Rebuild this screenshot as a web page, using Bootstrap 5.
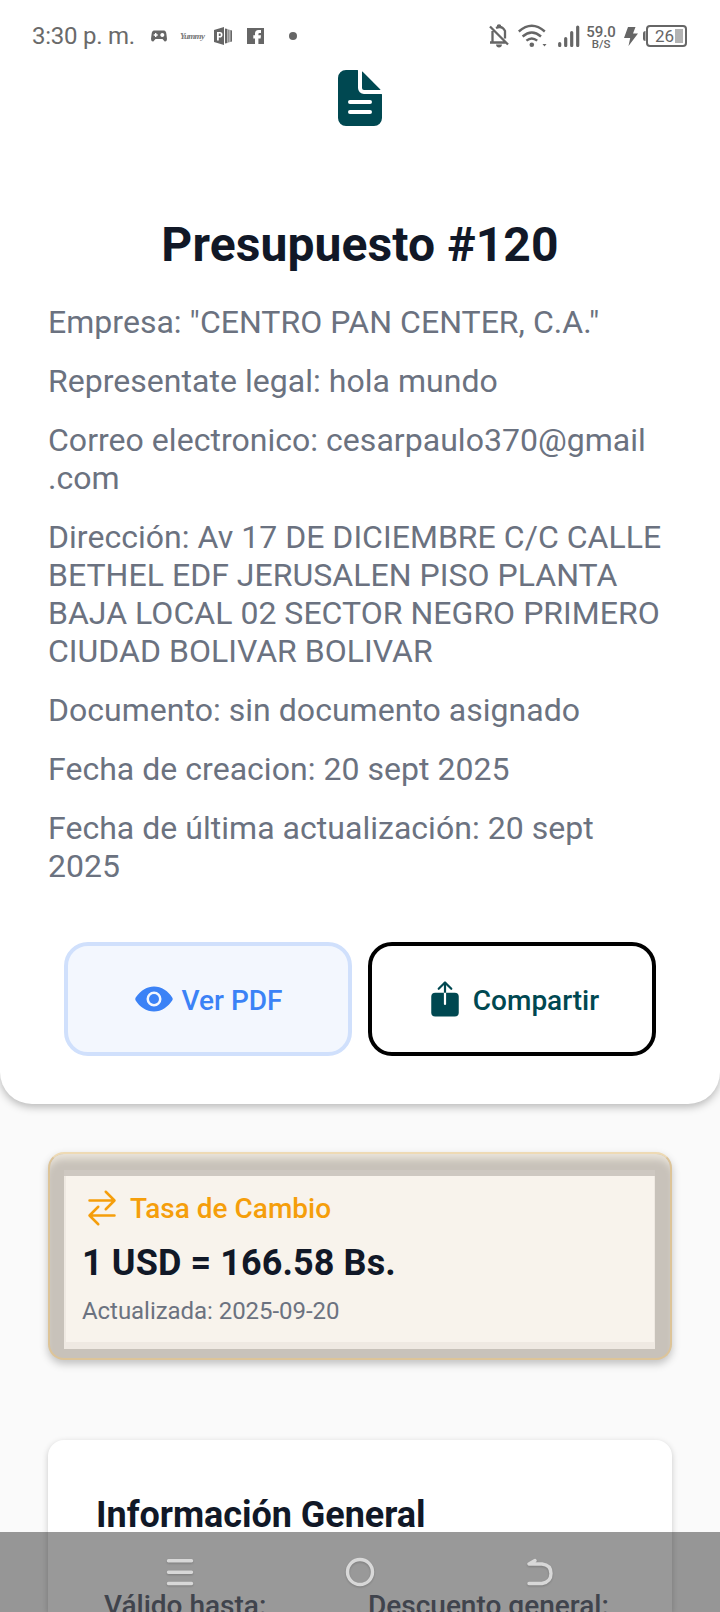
<!DOCTYPE html>
<html lang="es">
<head>
<meta charset="utf-8">
<meta name="viewport" content="width=device-width, initial-scale=1">
<title>Presupuesto #120</title>
<link href="https://cdn.jsdelivr.net/npm/bootstrap@5.3.0/dist/css/bootstrap.min.css" rel="stylesheet">
<style>
body{font-family:Roboto,sans-serif;background:#fafafa;height:1612px;overflow:hidden;color:#111827}
svg{display:block;flex:none}
.status-bar{height:70px;padding:2px 33px 0 32px;color:#666}
.clock{font-size:24px;line-height:28px;letter-spacing:-.25px;color:#6a6a6a;width:119px;white-space:nowrap}
.yummy{font:italic 700 9px/10px "Liberation Serif",serif;width:22px;margin:0 12px 0 13px;white-space:nowrap;letter-spacing:-.7px;color:#777}
.net-speed{width:30px;margin:2px 8px 0 6px;white-space:nowrap;font-size:15px;line-height:14px;font-weight:500}
.net-speed small{display:block;font-size:11.5px;line-height:10px}
.level{width:44px;height:22px;font-size:17px;line-height:22px}
.hero{height:1104px;border-radius:0 0 32px 32px;box-shadow:0 3px 8px rgba(0,0,0,.27)}
.hero h1{font-size:48px;line-height:56px;font-weight:700;letter-spacing:.1px;margin:91px 0 0}
.details{padding:0 48px;margin-top:30px;font-size:32px;line-height:38px;color:#6b7280;gap:21px}
.details p{margin:0;white-space:nowrap;letter-spacing:.03px}
.actions{padding:0 64px;margin-top:57px;gap:16px}
.action-btn{height:114px;width:288px;border-width:4px;border-radius:24px;font-size:28px;line-height:34px;font-weight:500}
.action-btn span{padding-top:3px}
.view-btn,.view-btn:hover{background:#f3f7fe;border-color:#d0e0fc;color:#3b82f6}
.share-btn,.share-btn:hover{background:#fff;border-color:#000;color:#004851}
.rate-card{margin:48px 48px 0;height:208px;border:2px solid #ddc498;border-top-color:#eedab4;border-radius:16px;padding:22px 15px 9px 14px;background:#c8c2ba;box-shadow:0 4px 9px rgba(0,0,0,.23),inset 0 9px 7px -4px #e9e4da}
.rate-body{height:173px;background:#f8f3ec;border:solid #efe9e2;border-width:0 1px 7px 2px;padding:12px 16px 0;box-shadow:0 -6px 0 #cec8c1}
.rate-title{font-size:28px;line-height:38px;font-weight:500;color:#f59e0b}
.rate-title span{padding-top:2px;line-height:36px}
.rate-value{font-size:36px;line-height:44px;font-weight:700;margin-top:13px;letter-spacing:.1px}
.rate-date{font-size:24px;line-height:28px;color:#6b7280;margin-top:12px;letter-spacing:-.05px}
.info-card{margin:80px 48px 0;height:172px;overflow:hidden;border-radius:16px 16px 0 0;box-shadow:0 2px 6px rgba(0,0,0,.2);padding:53px 48px 0}
.info-card h2{font-size:36px;line-height:44px;font-weight:700;margin:0;letter-spacing:-.04px}
.info-labels{font-size:28px;line-height:34px;font-weight:500;color:#6b7280;margin-top:52px}
.nav-keys{height:80px;padding:0 90px;background:rgba(0,0,0,.4)}
.nav-keys svg{filter:drop-shadow(0 1px 1px rgba(0,0,0,.2));stroke:#d8d8d8;fill:none;stroke-width:3.4;stroke-linecap:round;stroke-linejoin:round}
</style>
</head>
<body>
<header class="hero bg-white">
  <div class="status-bar d-flex align-items-center">
    <div class="clock">3:30 p. m.</div>
    <svg width="16" height="12" viewBox="0 0 16 12"><path fill="#666" fill-rule="evenodd" d="M3 .5h10Q15 .5 15.400 4L16 9q-.2 2.800-2.300 2.500L11.500 9h-7L2.300 11.500Q.2 11.800 0 9L.6 4Q1 .5 3 .5zM4 3v1.300H2.700v1.400H4V7h1.400V5.700h1.300V4.300H5.400V3zM11.300 3a2 2 0 1 0 .01 0z"/></svg>
    <span class="yummy">Yummy</span>
    <svg width="18" height="18" viewBox="0 0 18 18"><path fill="#666" fill-rule="evenodd" d="M0 3 10 0v18L0 15zM3 5v8.500h1.800V10.500h1Q8.500 10.500 8.500 7.700 8.500 5 6 5zm1.800 1.500H6q.8 0 .8 1.200T6 9H4.800zM11 1.500l2.500.6v13.800l-2.500.6zM14.300 2.500l1.200.3v12.400l-1.200.3zM16.300 3.100l1.700.5v10.800l-1.700.5z"/></svg>
    <svg style="margin-left:15px" width="17" height="16" viewBox="0 0 17 16"><path fill="#666" d="M0 0h17v16H0z"/><path fill="#fff" d="M8 16v-5.600H6.300V7.300H8V5.500Q8 2 11.500 2H14v3h-1.600q-1 0-1 1v1.300H14l-.4 3.100h-2.200V16z"/></svg>
    <svg width="8" height="8" style="margin-left:25px"><circle cx="4" cy="4" r="4" fill="#666"/></svg>
    <div class="ms-auto d-flex align-items-center">
      <svg width="20" height="24" viewBox="0 0 20 24" fill="none" stroke="#666" stroke-width="2.300"><path d="M3.500 7v10.500M1 18.500h16M7 4q6-3 9 3v7.500M1 2.500l18 18"/><path fill="#666" stroke="none" d="M8 3V1q2-1.500 4 0v2zM7 20.500h6q-.3 3-3 3t-3-3z"/></svg>
      <svg style="margin-left:9px" width="29" height="24" viewBox="0 0 29 24" fill="none" stroke="#666" stroke-width="2.400"><path d="M.8 7.500q13-11.500 26 0M4.600 12.500q9.200-8 18.400 0M8.400 16.600q5.400-4.400 10.800 0"/><circle cx="13.800" cy="20.700" r="2.300" fill="#666" stroke="none"/><path fill="#666" stroke="none" d="M24.500 20h4l-2 2.500z"/></svg>
      <svg style="margin-left:11px" width="22" height="22" viewBox="0 0 22 22" stroke="#666" stroke-width="3.200" stroke-linecap="round"><path d="M1.700 18.500v2M7.700 13.500v7M13.700 7.500v13M19.700 2v18.500"/></svg>
      <div class="net-speed text-center">59.0<small>B/S</small></div>
      <svg width="14" height="19" viewBox="0 0 14 19"><path fill="#666" d="M4 0h7.500L9 6.500h5L4.500 19l1.700-8H0z"/></svg>
      <div class="level position-relative" style="margin-left:5px">
        <svg width="44" height="22" viewBox="0 0 44 22"><rect x="4" y="1" width="39" height="20" rx="3" fill="#fff" stroke="#666" stroke-width="2"/><path fill="#666" d="M2.500 6v10Q0 16 0 13.500v-5Q0 6 2.500 6z"/><path fill="#b3b3b3" d="M32 4h8v14h-8z"/></svg>
        <span class="position-absolute top-0" style="left:12px">26</span>
      </div>
    </div>
  </div>
  <svg class="mx-auto" width="44" height="56" viewBox="80 32 352 448" fill="#004851"><path d="M428 224H288a48 48 0 0 1-48-48V36a4 4 0 0 0-4-4h-92a64 64 0 0 0-64 64v320a64 64 0 0 0 64 64h224a64 64 0 0 0 64-64V228a4 4 0 0 0-4-4zm-92 160H176a16 16 0 0 1 0-32h160a16 16 0 0 1 0 32zm0-80H176a16 16 0 0 1 0-32h160a16 16 0 0 1 0 32z"/><path d="M419.220 188.590 275.410 44.780a2 2 0 0 0-3.410 1.410V176a16 16 0 0 0 16 16h129.810a2 2 0 0 0 1.410-3.410z"/></svg>
  <h1 class="text-center">Presupuesto #120</h1>
  <div class="details d-flex flex-column">
    <p>Empresa: "CENTRO PAN CENTER, C.A."</p>
    <p>Representate legal: hola mundo</p>
    <p>Correo electronico: cesarpaulo370@gmail<br>.com</p>
    <p>Dirección: Av 17 DE DICIEMBRE C/C CALLE<br>BETHEL EDF JERUSALEN PISO PLANTA<br>BAJA LOCAL 02 SECTOR NEGRO PRIMERO<br>CIUDAD BOLIVAR BOLIVAR</p>
    <p>Documento: sin documento asignado</p>
    <p>Fecha de creacion: 20 sept 2025</p>
    <p>Fecha de última actualización: 20 sept<br>2025</p>
  </div>
  <div class="actions d-flex">
    <button class="btn action-btn view-btn d-flex align-items-center justify-content-center gap-2 p-0">
      <svg width="40" height="40" viewBox="0 0 512 512" fill="currentColor"><circle cx="256" cy="256" r="64"/><path d="M490.840 238.600c-26.460-40.920-60.790-75.680-99.270-100.530C349 110.550 302 96 255.660 96c-42.520 0-84.330 12.150-124.270 36.110-40.730 24.430-77.630 60.120-109.680 106.070a31.920 31.920 0 0 0-.64 35.540c26.410 41.330 60.400 76.140 98.280 100.650C162 402 207.900 416 255.660 416c46.710 0 93.810-14.430 136.200-41.720 38.460-24.770 72.720-59.660 99.080-100.920a32.200 32.200 0 0 0-.1-34.760zM256 352a96 96 0 1 1 96-96 96.110 96.110 0 0 1-96 96z"/></svg>
      <span>Ver PDF</span>
    </button>
    <button class="btn action-btn share-btn d-flex align-items-center justify-content-center gap-2 p-0">
      <svg width="40" height="40" viewBox="0 0 40 40" fill="none" stroke="currentColor" stroke-width="2.200" stroke-linecap="round" stroke-linejoin="round"><rect x="6.250" y="13.700" width="27.500" height="23.800" rx="4" fill="currentColor" stroke="none"/><path stroke="#fff" d="M20 14.500V25"/><path stroke-linecap="butt" d="M20 3v10.700"/><path d="m13.700 9.800 6.300-6.300 6.300 6.300"/></svg>
      <span>Compartir</span>
    </button>
  </div>
</header>
<main>
  <section class="rate-card">
    <div class="rate-body">
      <div class="rate-title d-flex align-items-center gap-2">
        <svg width="40" height="40" viewBox="0 0 512 512" fill="none" stroke="currentColor" stroke-width="32" stroke-linecap="round" stroke-linejoin="round"><path d="m304 48 112 112-112 112M398.870 160H96M208 464 96 352l112-112M114 352h302"/></svg>
        <span>Tasa de Cambio</span>
      </div>
      <div class="rate-value">1 USD = 166.58 Bs.</div>
      <div class="rate-date">Actualizada: 2025-09-20</div>
    </div>
  </section>
  <section class="info-card bg-white">
    <h2>Información General</h2>
    <div class="info-labels row g-0">
      <div class="col-6 px-2">Válido hasta:</div>
      <div class="col-6 px-2">Descuento general:</div>
    </div>
  </section>
</main>
<nav class="nav-keys fixed-bottom row g-0 align-items-center">
  <div class="col-4"><svg class="mx-auto" width="28" height="32" viewBox="0 0 28 32"><path d="M2.500 4.800h23M2.500 16.200h23M2.500 27.500h23"/></svg></div>
  <div class="col-4"><svg class="mx-auto" width="32" height="32" viewBox="0 0 32 32"><circle cx="16" cy="16" r="12.500"/></svg></div>
  <div class="col-4"><svg class="mx-auto" width="28" height="32" viewBox="0 0 28 32"><path d="M9 4.500 3 8h13q9 1 9 9.500t-9 10H3"/></svg></div>
</nav>
<script src="https://cdn.jsdelivr.net/npm/bootstrap@5.3.0/dist/js/bootstrap.bundle.min.js"></script>
</body>
</html>
